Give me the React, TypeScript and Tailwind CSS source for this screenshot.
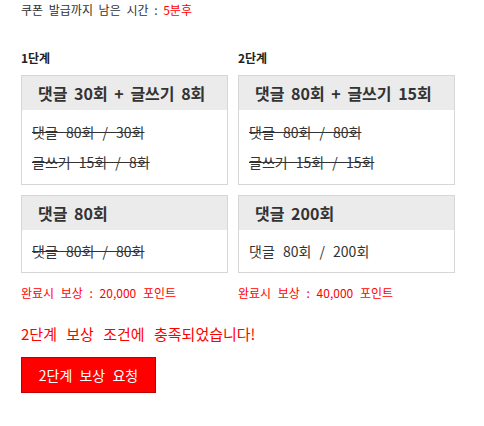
import React from "react";

const font = { fontFamily: '"Noto Sans CJK KR", "Noto Sans", sans-serif' };

function Box({
  title,
  lines,
  strike,
  w,
}: {
  title: string;
  lines: string[];
  strike: boolean[];
  w: string;
}) {
  return (
    <div className={`border border-[#d6d6d6] bg-white ${w}`}>
      <div className="h-[34px] bg-[#ebebeb] pl-[16px] text-[16px] font-bold leading-[34px] text-[#333] [word-spacing:3px]">
        {title}
      </div>
      <div
        className={`${lines.length > 1 ? "py-[7px]" : "py-[6px]"} pl-[10px] text-[14px] leading-[30px] text-[#333] [word-spacing:5px]`}
      >
        {lines.map((l, i) => (
          <div key={i} className={strike[i] ? "line-through" : ""}>
            {l}
          </div>
        ))}
      </div>
    </div>
  );
}

export default function App() {
  return (
    <div className="min-h-[426px] w-[484px] bg-white pl-[21px]" style={font}>
      <div className="text-[12px] leading-[20px] text-[#333] [word-spacing:3px]">
        쿠폰 발급까지 남은 시간 : <span className="text-[#ff0000]">5분후</span>
      </div>
      <div className="mt-[30px] flex gap-[10px]">
        <div className="flex w-[207px] flex-col">
          <div className="mb-[9px] text-[12px] font-bold leading-[16px] text-[#222]">1단계</div>
          <Box
            w="w-[207px]"
            title="댓글 30회 + 글쓰기 8회"
            lines={["댓글 80회 / 30회", "글쓰기 15회 / 8회"]}
            strike={[true, true]}
          />
          <div className="mt-[10px]">
            <Box w="w-[207px]" title="댓글 80회" lines={["댓글 80회 / 80회"]} strike={[true]} />
          </div>
          <div className="mt-[10px] text-[12px] leading-[20px] text-[#ff0000] [word-spacing:4px]">
            완료시 보상 : 20,000 포인트
          </div>
        </div>
        <div className="flex w-[217px] flex-col">
          <div className="mb-[9px] text-[12px] font-bold leading-[16px] text-[#222]">2단계</div>
          <Box
            w="w-[217px]"
            title="댓글 80회 + 글쓰기 15회"
            lines={["댓글 80회 / 80회", "글쓰기 15회 / 15회"]}
            strike={[true, true]}
          />
          <div className="mt-[10px]">
            <Box w="w-[217px]" title="댓글 200회" lines={["댓글 80회 / 200회"]} strike={[false]} />
          </div>
          <div className="mt-[10px] text-[12px] leading-[20px] text-[#ff0000] [word-spacing:4px]">
            완료시 보상 : 40,000 포인트
          </div>
        </div>
      </div>
      <div className="mt-[20px] text-[15px] leading-[22px] text-[#ff0000] [word-spacing:6px]">
        2단계 보상 조건에 충족되었습니다!
      </div>
      <button className="mt-[12px] flex h-[36px] w-[135px] items-center justify-center border border-[#c00000] bg-[#ff0000] text-[14px] text-white [word-spacing:4px]">
        2단계 보상 요청
      </button>
    </div>
  );
}
